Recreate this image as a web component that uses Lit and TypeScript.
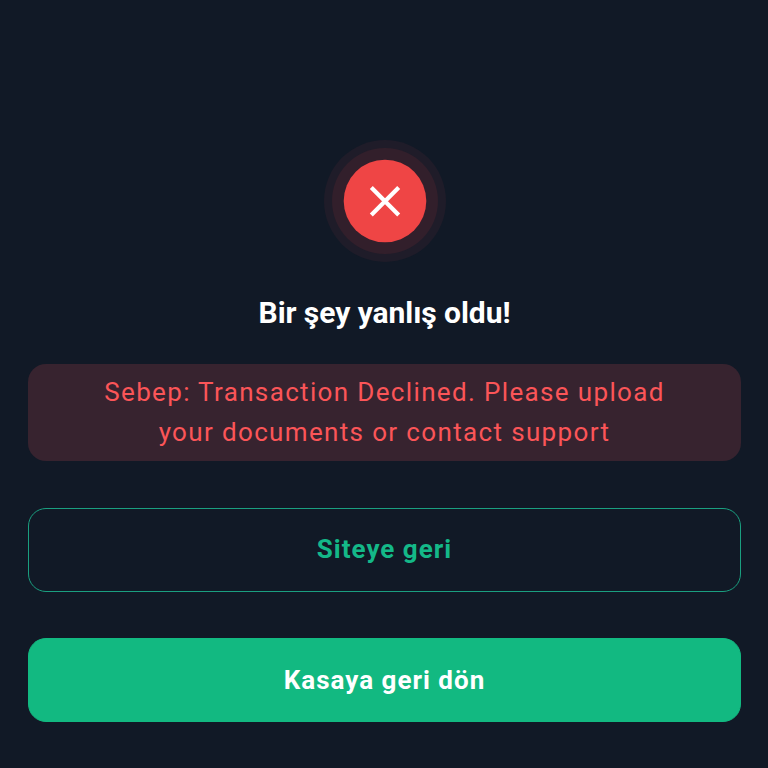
import { LitElement, html, css } from "lit";
import { customElement } from "lit/decorators.js";

@customElement("app-root")
class AppRoot extends LitElement {
  static styles = css`
    :host {
      display: flex;
      flex-direction: column;
      align-items: center;
      box-sizing: border-box;
      height: 768px;
      padding: 140px 27px 0 28px;
      background: #111926;
      font-family: Roboto, sans-serif;
      overflow: hidden;
    }
    .status { display: block; width: 122px; height: 122px; flex: none; }
    h1 {
      margin: 31px 0 0;
      font-size: 30px;
      line-height: 40px;
      font-weight: 700;
      letter-spacing: -0.05px;
      color: #fff;
      white-space: nowrap;
    }
    .reason, button {
      box-sizing: border-box;
      width: 100%;
      border-radius: 18px;
      font-size: 26px;
      text-align: center;
    }
    .reason {
      margin: 31px 0 47px;
      height: 97px;
      padding: 9px 70px;
      background: #37232f;
      color: #fb5558;
      line-height: 39.5px;
      letter-spacing: 1.35px;
    }
    .reason span { display: block; white-space: nowrap; }
    button {
      flex: none;
      height: 84px;
      padding: 0 0 2px;
      margin: 0 0 46px;
      font-family: inherit;
      font-weight: 700;
      letter-spacing: 1px;
      border: 1px solid #1a9f80;
      background: transparent;
      color: #14b888;
    }
    .primary {
      padding: 0;
      background: #12b981;
      border-color: #12b981;
      color: #fff;
    }
  `;

  render() {
    return html`
      <svg class="status" viewBox="0 0 122 122" aria-hidden="true">
        <circle cx="61" cy="61" r="61" fill="#1f1c29" />
        <circle cx="61" cy="61" r="53" fill="#321f2b" />
        <circle cx="61" cy="61" r="41.3" fill="#ef4545" />
        <path
          d="M47.3 47.6L74.7 75M74.7 47.6L47.3 75"
          stroke="#fff"
          stroke-width="4.2"
        />
      </svg>
      <h1>Bir şey yanlış oldu!</h1>
      <div class="reason">
        <span>Sebep: Transaction Declined. Please upload</span>
        <span>your documents or contact support</span>
      </div>
      <button>Siteye geri</button>
      <button class="primary">Kasaya geri dön</button>
    `;
  }
}
